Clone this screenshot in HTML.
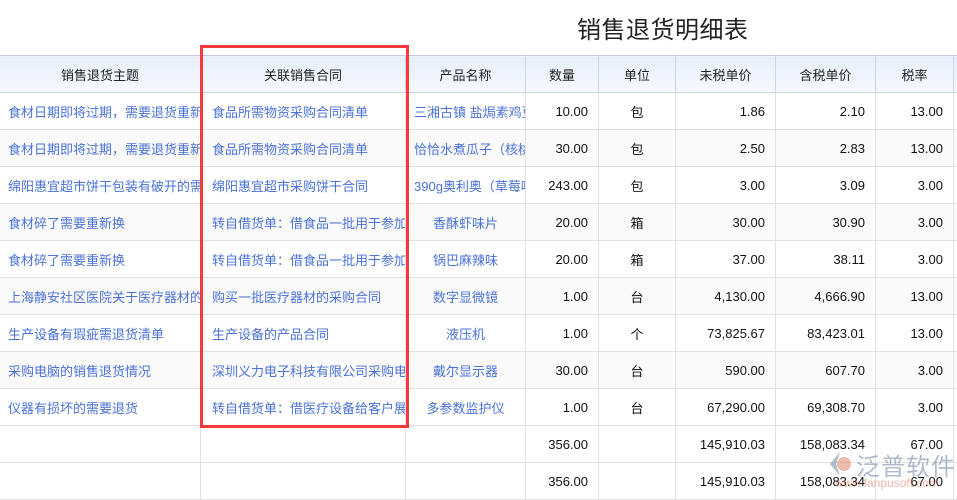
<!DOCTYPE html>
<html><head><meta charset="utf-8">
<style>
*{margin:0;padding:0;box-sizing:border-box}
body{width:957px;height:498px;overflow:hidden;background:#fff;font-family:"Liberation Sans","Noto Sans CJK SC",sans-serif;font-size:13px;color:#111;position:relative}
.title{position:absolute;left:577px;top:10px;font-size:24px;color:#222;letter-spacing:0.5px}
table{position:absolute;left:-1px;top:55px;border-collapse:collapse;table-layout:fixed;width:964px}
td,th{border:1px solid #e2e2e2;height:37px;white-space:nowrap;overflow:hidden;padding:0 8px;font-weight:normal}
th{background:linear-gradient(#e6effc,#f7f9fe);border-color:#c8d8ea;text-align:center;color:#222;height:37px;border-top:1px solid #bccde3}
tr.a td{background:#fff}
tr.b td{background:#fafafa}
.l{color:#4a72d8}
td:nth-child(2){padding-left:11px}
.c{text-align:center}
.r{text-align:right;padding-right:10px}
.box{position:absolute;left:200px;top:45px;width:209px;height:383px;border:3px solid #f43a3a}
.wm{position:absolute;left:856px;top:447px;font-size:24px;color:rgba(110,130,160,0.55);letter-spacing:1px}
.wm2{position:absolute;left:835px;top:476px;font-size:12px;color:rgba(220,110,80,0.5)}
</style></head><body>
<div class="title">销售退货明细表</div>
<table>
<colgroup><col style="width:201px"><col style="width:205px"><col style="width:120px"><col style="width:73px"><col style="width:77px"><col style="width:100px"><col style="width:100px"><col style="width:78px"><col style="width:10px"></colgroup>
<tr><th>销售退货主题</th><th>关联销售合同</th><th>产品名称</th><th>数量</th><th>单位</th><th>未税单价</th><th>含税单价</th><th>税率</th><th></th></tr>
<tr class="a"><td class="l">食材日期即将过期，需要退货重新</td><td class="l">食品所需物资采购合同清单</td><td class="l">三湘古镇 盐焗素鸡豆</td><td class="r">10.00</td><td class="c">包</td><td class="r">1.86</td><td class="r">2.10</td><td class="r">13.00</td><td></td></tr>
<tr class="b"><td class="l">食材日期即将过期，需要退货重新</td><td class="l">食品所需物资采购合同清单</td><td class="l">恰恰水煮瓜子（核桃</td><td class="r">30.00</td><td class="c">包</td><td class="r">2.50</td><td class="r">2.83</td><td class="r">13.00</td><td></td></tr>
<tr class="a"><td class="l">绵阳惠宜超市饼干包装有破开的需</td><td class="l">绵阳惠宜超市采购饼干合同</td><td class="l">390g奥利奥（草莓味</td><td class="r">243.00</td><td class="c">包</td><td class="r">3.00</td><td class="r">3.09</td><td class="r">3.00</td><td></td></tr>
<tr class="b"><td class="l">食材碎了需要重新换</td><td class="l">转自借货单：借食品一批用于参加</td><td class="l c">香酥虾味片</td><td class="r">20.00</td><td class="c">箱</td><td class="r">30.00</td><td class="r">30.90</td><td class="r">3.00</td><td></td></tr>
<tr class="a"><td class="l">食材碎了需要重新换</td><td class="l">转自借货单：借食品一批用于参加</td><td class="l c">锅巴麻辣味</td><td class="r">20.00</td><td class="c">箱</td><td class="r">37.00</td><td class="r">38.11</td><td class="r">3.00</td><td></td></tr>
<tr class="b"><td class="l">上海静安社区医院关于医疗器材的</td><td class="l">购买一批医疗器材的采购合同</td><td class="l c">数字显微镜</td><td class="r">1.00</td><td class="c">台</td><td class="r">4,130.00</td><td class="r">4,666.90</td><td class="r">13.00</td><td></td></tr>
<tr class="a"><td class="l">生产设备有瑕疵需退货清单</td><td class="l">生产设备的产品合同</td><td class="l c">液压机</td><td class="r">1.00</td><td class="c">个</td><td class="r">73,825.67</td><td class="r">83,423.01</td><td class="r">13.00</td><td></td></tr>
<tr class="b"><td class="l">采购电脑的销售退货情况</td><td class="l">深圳义力电子科技有限公司采购电</td><td class="l c">戴尔显示器</td><td class="r">30.00</td><td class="c">台</td><td class="r">590.00</td><td class="r">607.70</td><td class="r">3.00</td><td></td></tr>
<tr class="a"><td class="l">仪器有损坏的需要退货</td><td class="l">转自借货单：借医疗设备给客户展</td><td class="l c">多参数监护仪</td><td class="r">1.00</td><td class="c">台</td><td class="r">67,290.00</td><td class="r">69,308.70</td><td class="r">3.00</td><td></td></tr>
<tr class="a"><td></td><td></td><td></td><td class="r">356.00</td><td></td><td class="r">145,910.03</td><td class="r">158,083.34</td><td class="r">67.00</td><td></td></tr>
<tr class="a"><td></td><td></td><td></td><td class="r">356.00</td><td></td><td class="r">145,910.03</td><td class="r">158,083.34</td><td class="r">67.00</td><td></td></tr>
</table>
<div class="box"></div>
<svg style="position:absolute;left:826px;top:450px" width="28" height="28" viewBox="0 0 28 28"><path d="M14 2 L4 14 L14 26 L10 14 Z" fill="rgba(110,130,160,0.55)"/><circle cx="18" cy="14" r="7" fill="rgba(220,120,90,0.5)"/></svg>
<div class="wm">泛普软件</div>
<div class="wm2">www.fanpusoft.com</div>
</body></html>
